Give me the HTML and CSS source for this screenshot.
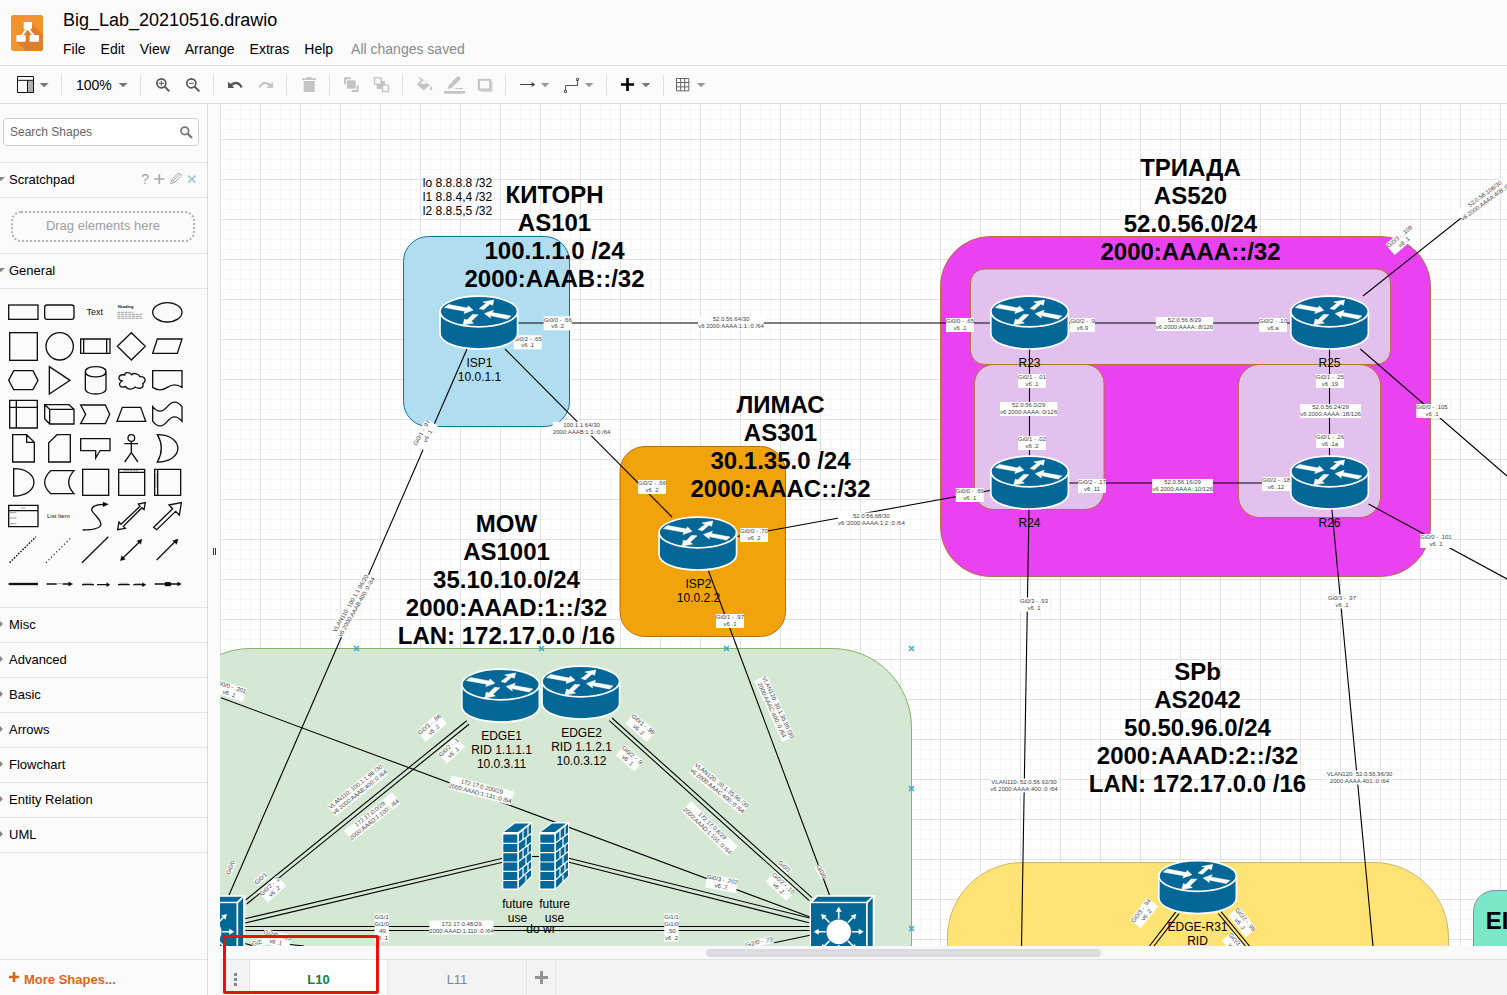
FILE: index.html
```html
<!DOCTYPE html>
<html lang="en">
<head>
<meta charset="utf-8">
<title>Big_Lab_20210516.drawio</title>
<link rel="stylesheet" href="styles.css">
</head>
<body>
<div class="app">
<header class="header">
  <svg class="logo" viewBox="33 45 96 108" width="32" height="36">
    <rect x="33" y="45" width="96" height="108" rx="8" fill="#f1942c"/>
    <path d="M92 68L129 104V145Q129 153 121 153H78L50 125L80 96Z" fill="#dd7f2b"/>
    <path d="M81 86L64 108M84 86L102 108" stroke="#fff" stroke-width="6"/>
    <rect x="71" y="66" width="25" height="22" rx="3" fill="#fff"/>
    <rect x="49" y="105" width="28" height="20" rx="3" fill="#fff"/>
    <rect x="89" y="105" width="28" height="20" rx="3" fill="#fff"/>
  </svg>
  <div class="titles">
    <div class="doc-title">Big_Lab_20210516.drawio</div>
    <nav class="menu"><span>File</span><span>Edit</span><span>View</span><span>Arrange</span><span>Extras</span><span>Help</span><span class="status">All changes saved</span></nav>
  </div>
</header>
<div class="toolbar">
  <svg viewBox="0 198 186 111" width="62" height="37">
    <rect x="82" y="241" width="19" height="36" fill="#b0b0b0"/>
    <path d="M52.500 229.500H100.500V277.500H52.500ZM52 241H101M82.500 241V277" fill="none" stroke="#111" stroke-width="3"/>
    <path d="M119 249H146L132.500 262Z" fill="#777"/><path d="M184.500 225V287" class="sep"/>
  </svg>
  <span class="zoom-level">100%</span>
  <svg viewBox="354 198 1770 111" width="590" height="37">
    <path d="M356 249H383L369.500 262Z" fill="#777"/>
    <path d="M421.500 225V287M640.500 225V287M859.500 225V287M988.500 225V287M1207.500 225V287M1516.500 225V287M1819.500 225V287M1990.500 225V287" class="sep"/>
    <g fill="none" stroke="#555" stroke-width="5"><circle cx="484" cy="250" r="13.500"/><path d="M494 260L508 274" stroke-width="6"/><path d="M476 250H492M484 242V258" stroke-width="3"/>
    <circle cx="574" cy="250" r="13.500"/><path d="M584 260L598 274" stroke-width="6"/><path d="M567 250H581" stroke-width="3"/></g>
    <path d="M684 245V264H703L697 257Q712 246 722 264L728 261Q716 236 691 251Z" fill="#555"/>
    <path d="M819 245V264H800L806 257Q791 246 781 264L775 261Q787 236 812 251Z" fill="#c8c8c8"/>
    <path d="M906 235H919L922 231H933L936 235H948V240H906ZM911 243H944V276H911Z" fill="#c4c4c4"/>
    <g fill="#c4c4c4"><rect x="1041" y="241" width="26" height="25"/><path d="M1032 232H1053V238H1038V253H1032ZM1076 276H1055V270H1070V256H1076Z"/>
    <path d="M1130 243H1155V267H1130Z"/></g>
    <path d="M1123.500 233.500H1143.500V252.500H1123.500ZM1147.500 255.500H1165.500V274.500H1147.500Z" fill="#fbfbfb" stroke="#c4c4c4" stroke-width="4"/>
    <path d="M1258 231L1274 242L1290 256L1271 271L1250 253L1264 241L1255 234ZM1293 257Q1301 270 1293 271Q1286 269 1293 257Z" fill="#c4c4c4"/><path d="M1260 251L1271 241L1282 251Z" fill="#fbfbfb"/>
    <path d="M1343 267L1346 256L1371 230Q1375 226 1379 231Q1384 234 1380 239L1354 265ZM1332 273H1395V281H1332ZM1362 267L1368 264H1389V267Z" fill="#c4c4c4"/>
    <path d="M1442 243H1478V276H1442Z" fill="#dadada"/><rect x="1436.500" y="239.500" width="34" height="29" fill="#fbfbfb" stroke="#c4c4c4" stroke-width="6"/>
    <path d="M1560 253.500H1600" stroke="#444" stroke-width="3"/><path d="M1595 246L1606 253.500L1595 261Z" fill="#444"/>
    <path d="M1623 249H1648L1635.500 262ZM1755 249H1780L1767.500 262ZM2091 249H2116L2103.500 262Z" fill="#999"/>
    <path d="M1696.500 271V256.500H1732.500V242" fill="none" stroke="#555" stroke-width="3"/><path d="M1693.500 271.500H1699.500V277.500H1693.500ZM1729.500 235.500H1735.500V241.500H1729.500Z" fill="#fff" stroke="#555" stroke-width="3"/>
    <path d="M1863 253.500H1902M1882.500 234V273" stroke="#000" stroke-width="8"/><path d="M1925 249H1951L1938 262Z" fill="#777"/>
    <path d="M2029.500 235.500H2066.500V272.500H2029.500ZM2042 235V273M2054 235V273M2029 247.500H2067M2029 260.500H2067" fill="none" stroke="#666" stroke-width="3"/>
  </svg>
</div>
<div class="workspace">
  <aside class="sidebar">
    <div class="search-wrap"><div class="search"><span>Search Shapes</span>
      <svg viewBox="542 59 38 38" width="13" height="13"><circle cx="556" cy="73" r="11" fill="none" stroke="#777" stroke-width="5"/><path d="M564 81L577 94" stroke="#777" stroke-width="7"/></svg></div></div>
    <div class="section open scratch"><i class="tri"></i><span>Scratchpad</span>
      <span class="tools"><b>?</b>
      <svg viewBox="461 205 126 36" width="42" height="12"><path d="M462 223H492M477 208V238" stroke="#aaa" stroke-width="5"/><path d="M511 237L514 225L533 206Q543 205 543 214L523 233ZM514 225L523 233M518 229L537 210" fill="none" stroke="#999" stroke-width="2.500"/><path d="M564 213L585 234M585 213L564 234" stroke="#a9c3d6" stroke-width="5"/></svg></span></div>
    <div class="drop-wrap"><div class="drop"><svg class="dots" width="184" height="31"><rect x="1" y="1" width="182" height="29" rx="9"/></svg><span>Drag elements here</span></div></div>
    <div class="section open general"><i class="tri"></i><span>General</span></div>
    <div class="palette">
    <svg width="207" height="318" viewBox="0 -3 621 954" class="shapes">
      <rect x="26" y="45" width="88" height="43"/><rect x="134" y="45" width="88" height="43" rx="7"/>
      <text x="284" y="75" font-size="27" text-anchor="middle">Text</text>
      <text x="353" y="53" font-size="12" font-weight="bold">Heading</text>
      <path d="M352 67H400M352 73H429M352 79H424M352 85H427" class="fine" stroke-dasharray="9 2"/>
      <ellipse cx="502" cy="67" rx="44" ry="29"/>
      <rect x="29" y="128" width="83" height="83"/><circle cx="179" cy="169" r="41"/>
      <path d="M242 147H330V190H242ZM251 147V190M320 147V190M394 128L436 169L394 210L352 169ZM472 147H546L532 190H458Z"/>
      <path d="M41 242H99L114 271L99 299H41L26 271ZM148 230L210 271L148 312Z"/>
      <path d="M256 245C256 225 318 225 318 245V297C318 317 256 317 256 297ZM256 245C256 266 318 266 318 245"/>
      <path d="M374 255C355 251 351 270 366 273C350 283 363 296 376 289C382 300 400 299 405 291C421 300 434 291 428 281C441 273 435 258 420 260C413 248 400 249 395 254C386 244 374 248 374 255Z"/>
      <path d="M458 242H546V292Q524 277 502 292T458 292Z"/>
      <path d="M29 331H112V414H29ZM29 352H112M49 331V414M134 344H207L222 358V402H149L134 386ZM134 344L149 358H222M149 358V402"/>
      <path d="M242 345H316L329 373L316 401H242L257 373ZM367 352H422L437 394H351ZM458 350Q480 377 502 350T546 350V394Q524 367 502 394T458 394Z"/>
      <path d="M38 434H80L103 457V516H38ZM80 434V457H103M171 434H211V516H146V458ZM242 446H330V482H300L287 504V482H242Z"/>
      <circle cx="394" cy="444" r="10"/><path d="M394 455V488M373 461H414M394 488L374 516M394 488L414 516M472 434C554 434 554 516 472 516Q496 475 472 434Z"/>
      <path d="M41 536C122 536 122 618 41 618ZM152 542H222Q190 577 222 611H152Q116 577 152 542Z"/>
      <rect x="248" y="538" width="78" height="78"/><path d="M356 538H434V616H356ZM356 547H434M464 538H542V616H464ZM473 538V616"/>
      <path d="M371 542H415M468 550V595" class="fine" stroke-dasharray="7 2"/>
      <path d="M26 646H114V710H26ZM26 662H114"/><path d="M63 654H76M29 668H49M29 684H49M29 701H49" class="fine"/>
      <text x="141" y="684" font-size="18" fill="#555">List Item</text>
      <path d="M248 720C352 718 276 675 275 659Q276 643 317 643"/><path d="M309 636L325 643L309 650Z" class="solid"/>
      <path d="M353 719L357 696L363 703L420 649L415 642L436 638L432 659L426 653L370 709L376 715ZM461 712L518 656L507 645L544 638L538 675L527 664L470 719Z"/>
      <path d="M29 818L108 740" stroke-dasharray="5 4"/><path d="M138 818L214 742" stroke-dasharray="3 8"/>
      <path d="M246 818L325 740M365 808L422 752M470 810L530 750"/><path d="M361 812L365 797L376 808ZM426 748L422 763L411 752ZM534 747L530 763L518 752Z" class="solid"/>
      <path d="M26 882H114" stroke-width="7"/><path d="M140 882H170M188 882H210M246 884H282M291 884H324M354 884H389M400 884H433M464 882H535"/><path d="M206 876L218 882L206 888ZM320 878L330 884L320 890ZM427 878L438 884L427 890ZM533 876L544 882L533 888ZM495 877H512V888H495Z" class="solid"/>
      <path d="M172 881H186M249 880H278M358 880H385M404 881H425" class="fine"/>
    </svg></div>
    <div class="section"><i class="tri side"></i><span>Misc</span></div>
    <div class="section"><i class="tri side"></i><span>Advanced</span></div>
    <div class="section"><i class="tri side"></i><span>Basic</span></div>
    <div class="section"><i class="tri side"></i><span>Arrows</span></div>
    <div class="section"><i class="tri side"></i><span>Flowchart</span></div>
    <div class="section"><i class="tri side"></i><span>Entity Relation</span></div>
    <div class="section"><i class="tri side"></i><span>UML</span></div>
    <div class="more"><svg width="10" height="10" viewBox="0 0 10 10"><path d="M0 5H10M5 0V10" stroke="#d9661f" stroke-width="2.600"/></svg><span>More Shapes...</span></div>
  </aside>
  <div class="splitter"><i></i><i></i></div>
  <main class="main">
    <svg class="canvas" id="canvas" width="1287" height="842" viewBox="220 104 1287 842">
      <defs>
        <pattern id="grid" x="220" y="139" width="40" height="40" patternUnits="userSpaceOnUse">
          <path d="M10.500 0V40M20.500 0V40M30.500 0V40M0 10.500H40M0 20.500H40M0 30.500H40" stroke="#f6f6f6"/><path d="M.5 0V40M0 .5H40" stroke="#e1e1e1"/>
        </pattern>
        <g id="router">
          <path d="M.5 16V38C.5 47 18 53.500 39.300 53.500S78.100 47 78.100 38V16Z" fill="#036897" stroke="#fff" stroke-width="1.700"/>
          <ellipse cx="39.300" cy="16" rx="38.800" ry="15.300" fill="#036897" stroke="#fff" stroke-width="1.700"/>
          <path d="M5 12L9 9L27.500 12.500L29 10.500L33.500 14.700L24.500 18L25.500 15.700ZM39.800 13L47 7.500L43.500 6.500L54.300 4.500L53 9.800L50.500 8.500L44 14.200ZM38.500 19.300L31.500 26L34 27.500L23.500 29.500L25 23.700L27.500 24.500L33 19ZM45 18L54 14.700L52.500 17L71.500 20.500L68 23.500L50.500 20L51 22.500Z" fill="#fff" stroke="#fff" stroke-width=".6"/>
        </g>
        <g id="firewall">
          <path d="M0 11L13 0H30V55L16 68H0Z" fill="#fff"/>
          <path d="M2 10L13 1.500H27L16 10Z" fill="#036897"/>
          <path d="M1.300 12.500H15.300V66.500H1.300Z" fill="#036897"/>
          <path d="M17 12L29 2V54L17 66Z" fill="#036897"/>
          <path d="M0 21.300H16M0 30.700H16M0 40H16M0 49.300H16M0 58.500H16M16 21.300L30 11M16 30.700L30 20M16 40L30 29M16 49.300L30 38M16 58.500L30 46M21 8V17M26 4V14M24 15V25M21 26V36M26 23V32M24 34V43M21 46V54M26 41V49M24 53V60" stroke="#fff" stroke-width="1.200"/>
        </g>
        <path id="ray" d="M-.8 -13V-20H-3L0 -25L3 -20H.8V-13Z" fill="#fff"/>
        <g id="switch">
          <path d="M-29 -29L-22 -36.500H36V26L28 34H-29Z" fill="#fff"/>
          <path d="M-26 -30L-21 -35H33L27.500 -30ZM29 -28.500L34 -34V24L29 29Z" fill="#036897"/><rect x="-27.700" y="-28.500" width="55" height="57" fill="#036897"/>
          <circle r="12.300" fill="#fff"/>
          <use href="#ray"/><use href="#ray" transform="rotate(45)"/><use href="#ray" transform="rotate(90)"/><use href="#ray" transform="rotate(135)"/><use href="#ray" transform="rotate(180)"/><use href="#ray" transform="rotate(225)"/><use href="#ray" transform="rotate(270)"/><use href="#ray" transform="rotate(315)"/>
        </g>
        <path id="anchor" d="M-2.500 -2.500L2.500 2.500M2.500 -2.500L-2.500 2.500" stroke="#29a8dc" stroke-width="1.200"/>
      </defs>
      <rect x="220" y="104" width="1287" height="842" fill="#fff"/>
      <rect x="220" y="104" width="1287" height="842" fill="url(#grid)"/>
      <rect x="403.500" y="236.500" width="166" height="190" rx="25" fill="#b1ddf0" stroke="#10739e"/>
      <rect x="620" y="446.500" width="165.500" height="190" rx="25" fill="#f0a30a" stroke="#bd7000"/>
      <rect x="171.500" y="648.500" width="740" height="530" rx="79" fill="#d5e8d4" stroke="#82b366"/>
      <g stroke="#b97134"><rect x="940.500" y="236.500" width="490" height="340" rx="50" fill="#ea42f0"/>
      <g fill="#e3c1ee"><rect x="970.500" y="269" width="420" height="95.500" rx="14"/><rect x="974.500" y="364.500" width="129.500" height="145" rx="19"/><rect x="1238.500" y="364.500" width="142" height="153" rx="21"/></g></g>
      <rect x="947.500" y="862.500" width="501" height="400" rx="75" fill="#ffe374" stroke="#cdb765"/>
      <rect x="1473.500" y="890.500" width="200" height="200" rx="21" fill="#7ae8c8" stroke="#8090a8"/>
      <g id="lines" fill="none" stroke="#000" stroke-width="1.100"></g>
      <g id="labels"></g>
      <g id="devices"></g>
      <g id="captions"></g>
    </svg>
    <div class="scroll"><div class="thumb"></div></div>
    <div class="tabs">
      <div class="tab-menu"><i></i><i></i><i></i></div><div class="tab active">L10</div><div class="tab">L11</div>
      <div class="tab-add"><svg width="13" height="13" viewBox="0 0 13 13"><path d="M0 6.500H13M6.500 0V13" stroke="#919396" stroke-width="3"/></svg></div>
    </div>
    <div class="highlight"></div>
  </main>
</div>
</div>
<script src="diagram.js"></script>
</body>
</html>
```
FILE: styles.css
```css
* { box-sizing: border-box; }
body { margin: 0; font-family: "Liberation Sans", Arial, sans-serif; color: #000; background: #fbfbfb; overflow: hidden; }
svg { display: block; flex: none; }
.app { width: 1507px; height: 995px; display: flex; flex-direction: column; }
.header { height: 66px; display: flex; padding: 0 0 0 11px; border-bottom: 1px solid #dcdcdc; }
.logo { margin-top: 15px; }
.titles { margin-left: 20px; }
.doc-title { font-size: 18px; line-height: 22px; margin-top: 9px; }
.menu { display: flex; font-size: 14px; line-height: 18px; margin-top: 9px; }
.menu span { margin-right: 15px; white-space: nowrap; }
.menu .status { color: #8a8a8a; margin-left: 3px; }
.toolbar { height: 38px; display: flex; border-bottom: 1px solid #dcdcdc; }
.zoom-level { width: 56px; padding-left: 14px; font-size: 14px; line-height: 38px; }
.sep { stroke: #dfdfdf; stroke-width: 3; }
.workspace { display: flex; flex: 1; min-height: 0; }
.sidebar { width: 208px; border-right: 1px solid #dcdcdc; display: flex; flex-direction: column; font-size: 13px; }
.search-wrap { height: 59px; padding: 14px 8px 0 3px; border-bottom: 1px solid #e4e4e4; }
.search { height: 28px; border: 1px solid #cfcfcf; border-radius: 4px; background: #fff; padding: 0 5px 0 6px; display: flex; align-items: center; justify-content: space-between; font-size: 12px; color: #666; }
.section { height: 35px; border-bottom: 1px solid #e4e4e4; display: flex; align-items: center; flex: none; padding-bottom: 2px; }
.section > span:first-of-type { margin-left: 4px; }
.tri { width: 5px; height: 4px; background: #888; clip-path: polygon(0 0, 100% 0, 20% 100%, 0 80%); }
.tri.side { width: 3px; height: 6px; margin-right: 2px; clip-path: polygon(0 0, 100% 50%, 0 100%); }
.tools { margin-left: auto; padding-right: 11px; display: flex; align-items: center; gap: 5px; color: #a2a2a2; }
.tools b { font-weight: normal; font-size: 14px; }
.drop-wrap { height: 56px; padding: 13px 0 0 11px; border-bottom: 1px solid #e4e4e4; }
.drop { width: 184px; height: 31px; display: grid; place-items: center; color: #a0a0a0; }
.drop > * { grid-area: 1 / 1; }
.drop span { padding-bottom: 2px; }
.dots rect { fill: none; stroke: #b3b3b3; stroke-width: 2; stroke-dasharray: 2 2; }
.palette { height: 319px; flex: none; border-bottom: 1px solid #e4e4e4; }
.shapes { fill: none; stroke: #111; stroke-width: 4; }
.shapes text { stroke: none; fill: #111; }
.shapes .fine { stroke: #777; stroke-width: 2; }
.shapes .solid { fill: #000; stroke-width: 1; }
.more { margin-top: auto; height: 36px; border-top: 1px solid #e4e4e4; display: flex; align-items: center; gap: 5px; padding: 4px 0 0 9px; color: #d9661f; font-weight: bold; }
.more svg { margin-top: -5px; }
.splitter { width: 12px; display: flex; justify-content: center; gap: 1px; padding: 444px 0 0 1px; }
.splitter i { width: 1px; height: 7px; background: #333; }
.main { width: 1287px; display: flex; flex-direction: column; position: relative; }
.canvas { font-family: "Liberation Sans", Arial, sans-serif; }
.heading { font-size: 24px; font-weight: bold; text-anchor: middle; }
.caption { font-size: 12px; text-anchor: middle; }
.link-label { font-size: 6px; text-anchor: middle; fill: #444; }
.scroll { height: 13px; background: #f8f9fa; padding: 3px 0 0 486px; }
.thumb { width: 395px; height: 8px; border-radius: 4px; background: #dadce0; }
.tabs { height: 36px; display: flex; background: #f1f3f4; border-top: 1px solid #e0e2e4; font-size: 13px; color: #80868b; }
.tab-menu { width: 30px; border-right: 1px solid #e4e6e8; display: flex; flex-direction: column; align-items: center; justify-content: center; gap: 2px; padding: 4px 0 0 2px; }
.tab-menu i { width: 3px; height: 3px; background: #85878a; }
.tab { width: 138px; border-right: 1px solid #e4e6e8; text-align: center; line-height: 39px; }
.tab.active { background: #fff; color: #188038; font-weight: bold; }
.tab + .tab:not(.active) { width: 139px; }
.tab-add { width: 29px; border-right: 1px solid #e4e6e8; padding: 11px 0 0 8px; }
.highlight { position: absolute; left: 3px; top: 831px; width: 156px; height: 59px; border: 3px solid #ea1010; border-radius: 2px; }
```
FILE: diagram.js
```js
const NS = 'http://www.w3.org/2000/svg';
function add(parent, tag, attrs, text) {
  const el = document.createElementNS(NS, tag);
  for (const k in attrs) el.setAttribute(k, attrs[k]);
  if (text) el.textContent = text;
  parent.appendChild(el);
  return el;
}
const byId = id => document.getElementById(id);

// Links: x1, y1, x2, y2
[
  [518,323,990,323],[1068,323,1290,323],[467,349,229,895],[505,349,672,517],
  [737,536.5,990,490.5],[708.5,571,829.5,895],[1029.5,349,1029.5,456],[1329.5,349,1329.5,456],
  [1069,483,1290,483],[1029,509,1021.5,946],[1331.8,508,1373,946],[1360.3,349,1507,476],
  [1363,296,1470,211],[1368.5,504,1507,579],[466.7,720.7,245.7,900],[469,724.3,246.7,904],
  [612,718,812,897.7],[609.3,720.7,809.3,900.7],[221,697.7,810.7,917.3],
  [245,918.7,502.7,858.3],[245,923,502.7,862.3],[532,856.5,540,856.5],
  [569,858.3,810.7,918.3],[569,862.3,809,922.7],[245,926.5,810,926.5],[245,930.5,810,930.5],
  [245,943.5,254,946],[290,944.5,304,946],[774,942.7,810,935.3],
  [1176,911.7,1149.5,946],[1179,913.7,1154,946],[1221,911.7,1249.5,946],[1218.4,913.7,1245.3,946]
].forEach(([x1, y1, x2, y2]) => add(byId('lines'), 'line', {x1, y1, x2, y2}));

// Link labels: centre x, centre y, rotation, lines separated by "|"
[
  [557.7,323.3,0,'Gi0/0 - .66|v6 .2'],[527.7,342.3,0,'Gi0/2 - .65|v6 .1'],
  [731,323,0,'52.0.56.64/30|v6 2000:AAAA:1:1::0 /64'],[581.5,428.7,0,'100.1.1.64/30|2000:AAAB:1:1::0 /64'],
  [652,487,0,'Gi0/2 - .66|v6 .2'],[754,535,0,'Gi0/0 - .70|v6 .2'],[730,621,0,'Gi0/1 - .97|v6 .1'],
  [871.3,519.5,0,"52.0.56.68/30|v6 '2000:AAAA:1:2::0 /64"],[960,325,0,'Gi0/0 - .65|v6 .1'],
  [1082.5,325,0,'Gi0/2 - .9|v6.9'],[1184.5,324,0,'52.0.56.8/29|v6 2000:AAAA::8/126'],[1273,325,0,'Gi0/2 - .10|v6.a'],
  [1032,381,0,'Gi0/1 - .01|v6 .1'],[1028.6,409,0,'52.0.56.0/29|v6 2000:AAAA::0/126'],[1032,443,0,'Gi0/1 - .02|v6 .2'],
  [1330,381,0,'Gi0/1 - .25|v6 .19'],[1330.5,411,0,'52.0.56.24/29|v6 2000:AAAA::18/126'],[1330,441,0,'Gi0/1 - .26|v6 .1a'],
  [969.8,495,0,'Gi0/0 - .69|v6 .1'],[1092,486,0,'Gi0/2 - .17|v6 .11'],[1182.5,486,0,'52.0.56.16/29|v6 2000:AAAA::10/126'],
  [1276,484,0,'Gi0/2 - .18|v6 .12'],[1432,411,0,'Gi0/0 - .105|v6 .1'],[1436,541,0,'Gi0/0 - .101|v6 .1'],
  [1034,604.5,0,'Gi0/3 - .93|v6 .1'],[1342,601.5,0,'Gi0/3 - .97|v6 .1'],
  [1024,785.5,0,'VLAN110: 52.0.56.92/30|v6 2000:AAAA:400::0 /64'],[1359.5,777.5,0,'VLAN120: 52.0.56.96/30|2000:AAAA:401::0 /64'],
  [461.5,927.5,0,'172.17.0.48/29|2000:AAAD:1:110::0 /64'],[381.7,927.5,0,'Gi1/1|Gi1/0|.49|v6 .1'],[671.5,927.5,0,'Gi1/1|Gi1/0|.50|v6 .2'],
  [425,434.5,-60,'Gi0/1 - .97|v6 .1'],[353.8,605.3,-60,'VLAN110: 100.1.1.96/30|v6 2000:AAAB:400::0 /64'],
  [1402,239.5,-40,'Gi0/3 - .109|v6 .1'],[1487,197,-36,'52.0.56.108/30|v6 2000:AAAA:408::0 /64'],
  [230,690.5,18,'Gi0/0 - .201|v6 .1'],[431.8,727.3,-41,'Gi0/1 - .98|v6 .2'],[451.3,750,-42,'Gi0/2 - .1|v6 .1'],
  [357.7,789.7,-38.5,'VLAN110: 100.1.1.96 /30|v6 2000:AAAB:400::0 /64'],[372.3,817,-38.5,'172.17.0.0/29|2000:AAAD:1:100:: /64'],
  [481,790.3,14.5,'172.17.0.200/29|2000:AAAD:1:131::0 /64'],[230.7,867.7,-68,'Gi0/0'],[261,878.7,-42,'Gi0/1'],
  [272.3,889,-42,'Gi0/2 - .2|v6 .2'],[259,942.5,-14,'Gi2/1'],[276.5,939,14,'Gi2/0 - .65|v6 .1'],
  [640.7,727.3,40,'Gi0/1 - .98|v6 .2'],[629.7,758,41,'Gi0/2 - .9|v6 .1'],[774.7,708.7,65,'VLAN120: 30.1.35.96 /30|2000:AAAC:400::0 /64'],
  [719.3,788.3,39,'VLAN120: 30.1.35.96 /30|v6 2000:AAAC:400::0 /64'],[709.7,828.7,44,'172.17.0.8/29|2000:AAAD:1:101::0 /64'],
  [721.7,883.3,11,'Gi0/3 - .202|v6 .2'],[784.3,866.7,42,'Gi0/1'],[780.7,886,43,'Gi0/2 - .10|v6 .2'],[821,871.7,62,'Gi0/0'],
  [759,942.3,-12,'Gi2/0 - .73'],[1144,913,-52,'Gi0/3 - .94|v6 .2'],[1242.4,922,51,'Gi0/2 - .98|v6 .2'],[1236,947,51,'Gi0/3 - .90|v6 .1']
].forEach(([x, y, r, s]) => {
  const lines = s.split('|'), h = lines.length * 7;
  const g = add(byId('labels'), 'g', {class: 'link-label', transform: `translate(${x} ${y}) rotate(${r})`});
  const box = add(g, 'rect', {fill: '#fff', y: -h / 2, height: h});
  const widths = lines.map((t, i) => add(g, 'text', {x: 0, y: -h / 2 + 5.2 + i * 7}, t).getComputedTextLength());
  const w = Math.max(...widths);
  box.setAttribute('x', -w / 2);
  box.setAttribute('width', w);
});

// Devices: symbol, x, y
[
  ['router',439.5,295.5],['router',658.5,516.5],['router',990.3,295.5],['router',1290.3,295.5],
  ['router',990.3,455.5],['router',1290.3,455.5],['router',461.3,668.5],['router',541.5,665.5],['router',1158.3,860],
  ['firewall',502,822],['firewall',539,822],['switch',209.2,931.7],['switch',838.7,931.7],
  ['anchor',356.5,648.5],['anchor',541.5,648.5],['anchor',726.5,648.5],['anchor',911.5,648.5],['anchor',911.5,788.5],['anchor',911.5,928.5]
].forEach(([id, x, y]) => add(byId('devices'), 'use', {href: '#' + id, transform: `translate(${x} ${y})`}));

// Captions: class, centre x, first baseline, line height, lines
[
  ['heading',554.5,203,28,'КИТОРН|AS101|100.1.1.0 /24|2000:AAAB::/32'],
  ['heading',1190.5,176,28,'ТРИАДА|AS520|52.0.56.0/24|2000:AAAA::/32'],
  ['heading',780.5,413,28,'ЛИМАС|AS301|30.1.35.0 /24|2000:AAAC::/32'],
  ['heading',506.5,532,28,'MOW|AS1001|35.10.10.0/24|2000:AAAD:1::/32|LAN: 172.17.0.0 /16'],
  ['heading',1197.5,680,28,'SPb|AS2042|50.50.96.0/24|2000:AAAD:2::/32|LAN: 172.17.0.0 /16'],
  ['heading',1497,929,28,'EI'],
  ['caption',457.5,187,14,'lo 8.8.8.8 /32|l1 8.8.4,4 /32|l2 8.8.5,5 /32'],
  ['caption',479.5,367,14,'ISP1|10.0.1.1'],['caption',698.5,588,14,'ISP2|10.0.2.2'],
  ['caption',1029.5,367,14,'R23'],['caption',1329.5,367,14,'R25'],['caption',1029.5,527,14,'R24'],['caption',1329.5,527,14,'R26'],
  ['caption',501.5,740,14,'EDGE1|RID 1.1.1.1|10.0.3.11'],['caption',581.5,737,14,'EDGE2|RID 1.1.2.1|10.0.3.12'],
  ['caption',517.5,908,14,'future|use'],['caption',554.5,908,14,'future|use'],['caption',541,933,14,'do wr'],
  ['caption',1197.5,931,14,'EDGE-R31|RID']
].forEach(([cls, x, y, lh, s]) => s.split('|').forEach((t, i) => add(byId('captions'), 'text', {class: cls, x, y: y + i * lh}, t)));
```
